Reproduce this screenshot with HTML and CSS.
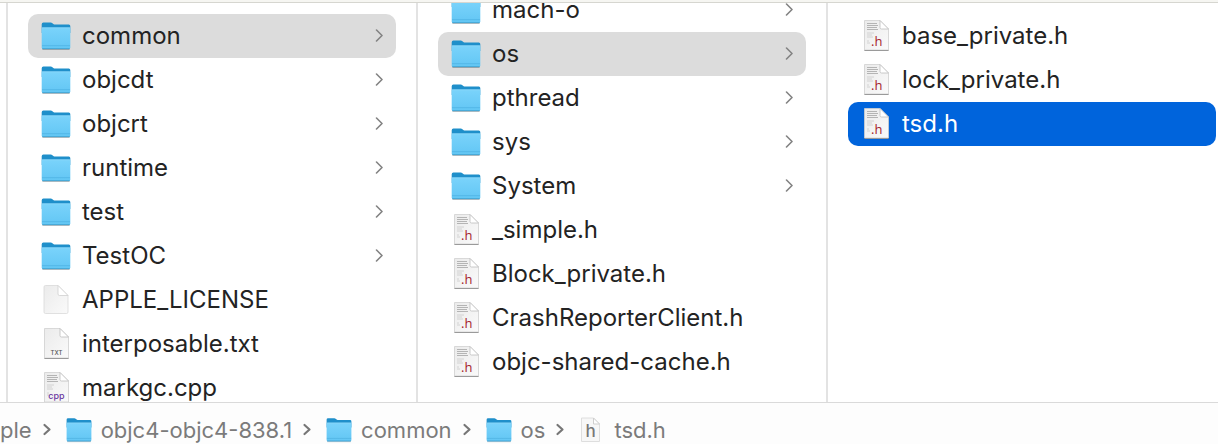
FILE: index.html
```
<!DOCTYPE html>
<html lang="en">
<head>
<meta charset="utf-8">
<title>tsd.h</title>
<link rel="stylesheet" href="styles.css">
</head>
<body>
<svg class="sprite" aria-hidden="true">
  <defs>
    <linearGradient id="front" x1="0" y1="0" x2="0" y2="1">
      <stop offset="0" stop-color="#7ad3fb"/><stop offset="1" stop-color="#62c6f4"/>
    </linearGradient>
    <linearGradient id="paper" x1="0" y1="0" x2="1" y2="1">
      <stop offset="0" stop-color="#ebebeb"/><stop offset="1" stop-color="#fafafa"/>
    </linearGradient>
    <symbol id="folder" viewBox="0 0 30 30">
      <path d="M1.5 28h27v1h-27z" fill="#000" opacity=".25"/>
      <path d="M.7 3.2Q.7 1.5 2.4 1.5h7.3q1 0 1.7.7l1.3 1q.5.4 1.300.4h13.800q1.500 0 1.500 1.500V12H.7z" fill="#1f8fca"/>
      <path d="M.7 7.500Q.7 6.500 1.700 6.500h26.600q1 0 1 1v19q0 1.500-1.500 1.500H2.200Q.7 28 .7 26.500z" fill="url(#front)"/>
      <path d="M1 6.800h28" stroke="#9adcfa" stroke-width=".6"/>
      <path d="M1 24.700h28" stroke="#4eb2e2" stroke-width=".8"/>
      <path d="M1.200 27.700h27.600" stroke="#409fce" stroke-width=".9"/>
    </symbol>
    <symbol id="page" viewBox="0 0 30 34">
      <path d="M3.500 2.500h15.500l8.500 8.500v20.500h-24z" fill="#000" opacity=".1"/>
      <path d="M3.500 31.500h24" stroke="#777" stroke-width="1"/>
      <path d="M3.500 1.500h15.500l8.500 8.500v21h-24z" fill="url(#paper)" stroke="#d0d0d0" stroke-width=".8"/>
      <path d="M19 1.500v7q0 1.500 1.500 1.500h7z" fill="#fff" stroke="#bdbdbd" stroke-width=".8"/>
    </symbol>
    <symbol id="blank" viewBox="0 0 30 34">
      <path d="M4.500 2.500h12.500l10 10v16.500q0 1.500-1.500 1.500h-21q-1.500 0-1.500-1.500v-25q0-1.500 1.500-1.500z" fill="url(#paper)" stroke="#d9d9d9" stroke-width=".8"/>
      <path d="M17 2.500v8.500q0 1.500 1.500 1.500h8.500z" fill="#fff" stroke="#cfcfcf" stroke-width=".8"/>
    </symbol>
    <symbol id="code" viewBox="0 0 30 34">
      <use href="#page"/>
      <path d="M6 4.500h10M6 6.500h11M6 8.500h10M6 10.500h11" stroke="#b4b4b4" stroke-width="1.200"/>
      <path d="M6 14h7M6 16h5M6 18h6M6 22h2M6 24h3" stroke="#d2d2d2" stroke-width="1"/>
    </symbol>
    <symbol id="header" viewBox="0 0 30 34">
      <use href="#code"/>
      <text x="10" y="26.500" class="tag-h">.h</text>
    </symbol>
    <symbol id="cpp" viewBox="0 0 30 34">
      <use href="#code"/>
      <text x="15.500" y="27.500" class="tag-cpp">cpp</text>
    </symbol>
    <symbol id="txt" viewBox="0 0 30 34">
      <use href="#page"/>
      <text x="15.500" y="27.500" class="tag-txt">TXT</text>
    </symbol>
    <symbol id="chevron" viewBox="0 0 10 14">
      <path d="M2.500 1l5.500 5.500-5.500 5.500" fill="none" stroke="currentColor" stroke-width="1.600" stroke-linecap="round" stroke-linejoin="round"/>
    </symbol>
    <symbol id="path-chevron" viewBox="0 0 10 14">
      <path d="M2.500 2l5 4.500-5 4.500" fill="none" stroke="currentColor" stroke-width="2.200" stroke-linecap="round" stroke-linejoin="round"/>
    </symbol>
  </defs>
</svg>
<div class="browser">
  <div class="toolbar-edge"></div>
  <main class="columns">
    <div class="sliver"></div>
    <section class="column" aria-label="objc4-objc4-838.1">
      <button class="row current"><svg class="icon"><use href="#folder"/></svg><span class="name">common</span><svg class="chevron"><use href="#chevron"/></svg></button>
      <button class="row"><svg class="icon"><use href="#folder"/></svg><span class="name">objcdt</span><svg class="chevron"><use href="#chevron"/></svg></button>
      <button class="row"><svg class="icon"><use href="#folder"/></svg><span class="name">objcrt</span><svg class="chevron"><use href="#chevron"/></svg></button>
      <button class="row"><svg class="icon"><use href="#folder"/></svg><span class="name">runtime</span><svg class="chevron"><use href="#chevron"/></svg></button>
      <button class="row"><svg class="icon"><use href="#folder"/></svg><span class="name">test</span><svg class="chevron"><use href="#chevron"/></svg></button>
      <button class="row"><svg class="icon"><use href="#folder"/></svg><span class="name">TestOC</span><svg class="chevron"><use href="#chevron"/></svg></button>
      <button class="row"><svg class="icon file"><use href="#blank"/></svg><span class="name">APPLE_LICENSE</span></button>
      <button class="row"><svg class="icon file"><use href="#txt"/></svg><span class="name">interposable.txt</span></button>
      <button class="row"><svg class="icon file"><use href="#cpp"/></svg><span class="name">markgc.cpp</span></button>
    </section>
    <section class="column scrolled" aria-label="common">
      <button class="row"><svg class="icon"><use href="#folder"/></svg><span class="name">mach-o</span><svg class="chevron"><use href="#chevron"/></svg></button>
      <button class="row current"><svg class="icon"><use href="#folder"/></svg><span class="name">os</span><svg class="chevron"><use href="#chevron"/></svg></button>
      <button class="row"><svg class="icon"><use href="#folder"/></svg><span class="name">pthread</span><svg class="chevron"><use href="#chevron"/></svg></button>
      <button class="row"><svg class="icon"><use href="#folder"/></svg><span class="name">sys</span><svg class="chevron"><use href="#chevron"/></svg></button>
      <button class="row"><svg class="icon"><use href="#folder"/></svg><span class="name">System</span><svg class="chevron"><use href="#chevron"/></svg></button>
      <button class="row"><svg class="icon file"><use href="#header"/></svg><span class="name">_simple.h</span></button>
      <button class="row"><svg class="icon file"><use href="#header"/></svg><span class="name">Block_private.h</span></button>
      <button class="row"><svg class="icon file"><use href="#header"/></svg><span class="name">CrashReporterClient.h</span></button>
      <button class="row"><svg class="icon file"><use href="#header"/></svg><span class="name">objc-shared-cache.h</span></button>
    </section>
    <section class="column last" aria-label="os">
      <button class="row"><svg class="icon file"><use href="#header"/></svg><span class="name">base_private.h</span></button>
      <button class="row"><svg class="icon file"><use href="#header"/></svg><span class="name">lock_private.h</span></button>
      <button class="row selected"><svg class="icon file"><use href="#header"/></svg><span class="name">tsd.h</span></button>
    </section>
  </main>
  <nav class="path" aria-label="Path">
    <a class="crumb" href="#">ple</a>
    <svg class="separator"><use href="#path-chevron"/></svg>
    <a class="crumb" href="#"><svg class="crumb-icon"><use href="#folder"/></svg>objc4-objc4-838.1</a>
    <svg class="separator"><use href="#path-chevron"/></svg>
    <a class="crumb" href="#"><svg class="crumb-icon"><use href="#folder"/></svg>common</a>
    <svg class="separator"><use href="#path-chevron"/></svg>
    <a class="crumb" href="#"><svg class="crumb-icon"><use href="#folder"/></svg>os</a>
    <svg class="separator"><use href="#path-chevron"/></svg>
    <a class="crumb" href="#"><svg class="crumb-icon" viewBox="0 0 26 26">
      <path d="M2.500 1h12l6 6v17.500h-18z" fill="#f7f7f7" stroke="#dedede"/>
      <path d="M14.500 1v6h6z" fill="#fff" stroke="#cfcfcf"/>
      <text x="11.500" y="19.500" class="tag-doc">h</text>
    </svg>tsd.h</a>
  </nav>
</div>
</body>
</html>
```
FILE: styles.css
```
* {
  box-sizing: border-box;
}

body {
  margin: 0;
  background: #fff;
  color: #232323;
  font-family: Inter, "Liberation Sans", sans-serif;
}

.sprite {
  position: absolute;
  width: 0;
  height: 0;
}

.browser {
  display: flex;
  flex-direction: column;
  height: 100vh;
  overflow: hidden;
}

.toolbar-edge {
  flex: none;
  height: 3px;
  background: #f6f6f2;
  border-bottom: 1px solid #d6d6d0;
}

.columns {
  display: grid;
  grid-template-columns: 8px 410fr 410fr 390fr;
  flex: 1;
  min-height: 0;
}

.sliver,
.column {
  border-right: 2px solid #e3e3e3;
}

.column {
  min-width: 0;
  padding: 11px 20px 0;
  overflow: hidden;
}

.column.last {
  padding-right: 2px;
  border-right: 0;
}

.column.scrolled .row:first-child {
  margin-top: -26px;
}

.row {
  display: flex;
  align-items: center;
  width: 100%;
  height: 44px;
  padding: 0 12px 0 13px;
  border: 0;
  border-radius: 10px;
  background: none;
  color: inherit;
  font: inherit;
  font-size: 24px;
  line-height: 28px;
  text-align: left;
}

.row.current {
  background: #dcdcdc;
}

.row.selected {
  background: #0064dc;
  color: #fff;
}

.icon {
  flex: none;
  width: 30px;
  height: 30px;
  margin-right: 11px;
}

.icon.file {
  height: 34px;
}

.name {
  flex: 1;
  white-space: nowrap;
}

.chevron {
  flex: none;
  width: 10px;
  height: 14px;
  color: #838383;
}

.path {
  display: flex;
  flex: none;
  align-items: center;
  gap: 10px;
  height: 42px;
  padding-top: 12px;
  border-top: 1px solid #dadada;
  background: #fdfdfd;
}

.crumb {
  display: flex;
  align-items: center;
  gap: 9px;
  color: #7b7b7b;
  font-size: 22px;
  line-height: 26px;
  text-decoration: none;
  white-space: nowrap;
}

.crumb-icon {
  flex: none;
  width: 26px;
  height: 26px;
}

.separator {
  flex: none;
  width: 10px;
  height: 14px;
  margin-right: 4px;
  color: #777;
}

.tag-h {
  fill: #a51c2c;
  font: 13px "Open Sans", sans-serif;
}

.tag-cpp {
  fill: #6a35a0;
  font: 500 9px Inter, sans-serif;
  text-anchor: middle;
}

.tag-txt {
  fill: #555;
  font: 500 6px Inter, sans-serif;
  text-anchor: middle;
}

.tag-doc {
  fill: #777;
  font: 500 17px Inter, sans-serif;
  text-anchor: middle;
}
```
